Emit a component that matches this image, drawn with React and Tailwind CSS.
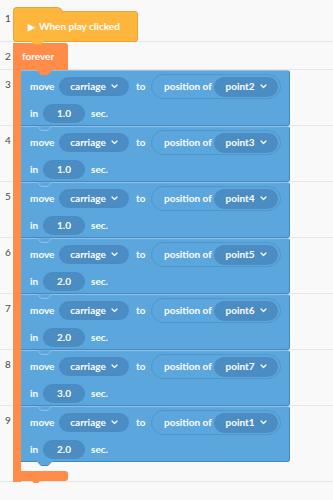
import React from "react";

const moves = [
  { line: 3, point: "point2", secs: "1.0" },
  { line: 4, point: "point3", secs: "1.0" },
  { line: 5, point: "point4", secs: "1.0" },
  { line: 6, point: "point5", secs: "2.0" },
  { line: 7, point: "point6", secs: "2.0" },
  { line: 8, point: "point7", secs: "3.0" },
  { line: 9, point: "point1", secs: "2.0" },
];

const rowStart = {
  3: "row-start-3",
  4: "row-start-4",
  5: "row-start-5",
  6: "row-start-6",
  7: "row-start-7",
  8: "row-start-8",
  9: "row-start-9",
};

const Chevron = () => (
  <svg width="7" height="5" viewBox="0 0 7 5" className="ml-[5px]">
    <polyline points="1,1 3.5,3.5 6,1" fill="none" stroke="#ffffff" strokeWidth="1.2" strokeLinecap="round" strokeLinejoin="round" />
  </svg>
);

const MoveBlock = ({ line, point, secs, first }) => (
  <div
    className={`${rowStart[line]} col-start-3 relative flex flex-col bg-[#5ba6dc] border-t border-[#93c1e6] border-r border-r-[#4387c2] border-b border-b-[#4387c2] rounded-r-[3px] pl-[9px] pt-[6px] text-white`}
  >
    <svg width="16" height="6" viewBox="0 0 16 6" className="absolute left-[16px] -top-[1px]">
      <polygon points="0,0 4,4.5 11,4.5 15,0" fill={first ? "#ff8c48" : "#5ba6dc"} stroke={first ? "#ff8c48" : "#93c1e6"} strokeWidth="1" />
    </svg>
    <div className="flex items-center h-[19px]">
      <span className="w-[29px]">move</span>
      <span className="flex items-center justify-center w-[70px] h-[19px] rounded-full bg-[#4b8dc3]">
        carriage
        <Chevron />
      </span>
      <span className="ml-[7px] w-[15px]">to</span>
      <span className="flex items-center w-[130px] h-[25px] rounded-full border border-[#4f96cd] pl-[12px]">
        <span className="w-[50px]">position of</span>
        <span className="flex items-center justify-center w-[64px] h-[20px] rounded-full bg-[#4b8dc3]">
          {point}
          <Chevron />
        </span>
      </span>
    </div>
    <div className="flex items-center h-[19px] mt-[8px]">
      <span className="w-[13px]">in</span>
      <span className="flex items-center justify-center w-[42px] h-[19px] rounded-full bg-[#4b8dc3]">{secs}</span>
      <span className="ml-[6px]">sec.</span>
    </div>
  </div>
);

export default function App() {
  const lineRows = [
    { n: 1, cls: "row-start-1 pt-[4px]" },
    { n: 2, cls: "row-start-2" },
    { n: 3, cls: "row-start-3" },
    { n: 4, cls: "row-start-4" },
    { n: 5, cls: "row-start-5" },
    { n: 6, cls: "row-start-6" },
    { n: 7, cls: "row-start-7" },
    { n: 8, cls: "row-start-8" },
    { n: 9, cls: "row-start-9 row-span-2" },
  ];

  return (
    <div
      className="w-[333px] h-[500px] bg-[#f9f9f9] overflow-hidden text-[10px] font-bold"
      style={{ fontFamily: "Lato, 'Open Sans', sans-serif" }}
    >
      <div className="grid grid-cols-[13px_8px_269px_1fr] grid-rows-[42px_28px_repeat(7,56px)_20px]">
        {lineRows.map((r) => (
          <div
            key={r.n}
            className={`${r.cls} col-start-1 col-span-4 border-b border-[#e6e6e6] pl-[5px] leading-[28px] font-normal text-[#4a4a4a]`}
          >
            {r.n}
          </div>
        ))}

        {/* hat block */}
        <div className="row-start-1 col-start-2 col-span-2 relative self-end w-[125px] h-[31px] bg-[#ffb63c] border border-[#eaa334] rounded-r-[3px] rounded-bl-[3px] flex items-center pl-[14px] text-white z-10">
          <div className="absolute -left-[1px] -top-[5px] w-[50px] h-[6px] bg-[#ffb63c] border-t border-l border-r border-[#eaa334] rounded-tl-[4px] rounded-tr-[6px]" />
          <div className="absolute left-0 -top-[1px] w-[48px] h-[3px] bg-[#ffb63c]" />
          <svg width="16" height="6" viewBox="0 0 16 6" className="absolute left-[16px] -bottom-[5px]">
            <polygon points="0,0 4,4.5 11,4.5 15,0" fill="#ffb63c" />
          </svg>
          <span className="text-[9px] mr-[4px]">▶</span>
          When play clicked
        </div>

        {/* forever */}
        <div className="row-start-2 col-start-2 col-span-2 w-[55px] bg-[#ff8c48] rounded-tr-[3px] pl-[9px] flex items-center text-white mt-[1px]">
          forever
        </div>
        <div className="row-start-3 row-span-8 col-start-2 bg-[#ff8c48]" />
        <div className="row-start-10 col-start-2 col-span-2 relative self-end w-[55px] h-[10px] mb-[1px] bg-[#ff8c48] rounded-r-[3px] rounded-bl-[3px]">
          <svg width="10" height="4" viewBox="0 0 10 4" className="absolute left-[18px] -bottom-[3px]">
            <polygon points="0,0 3,3 7,3 10,0" fill="#ff8c48" />
          </svg>
        </div>

        {moves.map((m, i) => (
          <MoveBlock key={m.line} {...m} first={i === 0} />
        ))}
        <div className="row-start-10 col-start-3 relative">
          <svg width="16" height="6" viewBox="0 0 16 6" className="absolute left-[16px] -top-[1px]">
            <polygon points="0,0 4,4.5 11,4.5 15,0" fill="#5ba6dc" stroke="#4387c2" strokeWidth="1" />
            <rect x="0" y="0" width="16" height="1.2" fill="#5ba6dc" />
          </svg>
        </div>
      </div>
    </div>
  );
}
